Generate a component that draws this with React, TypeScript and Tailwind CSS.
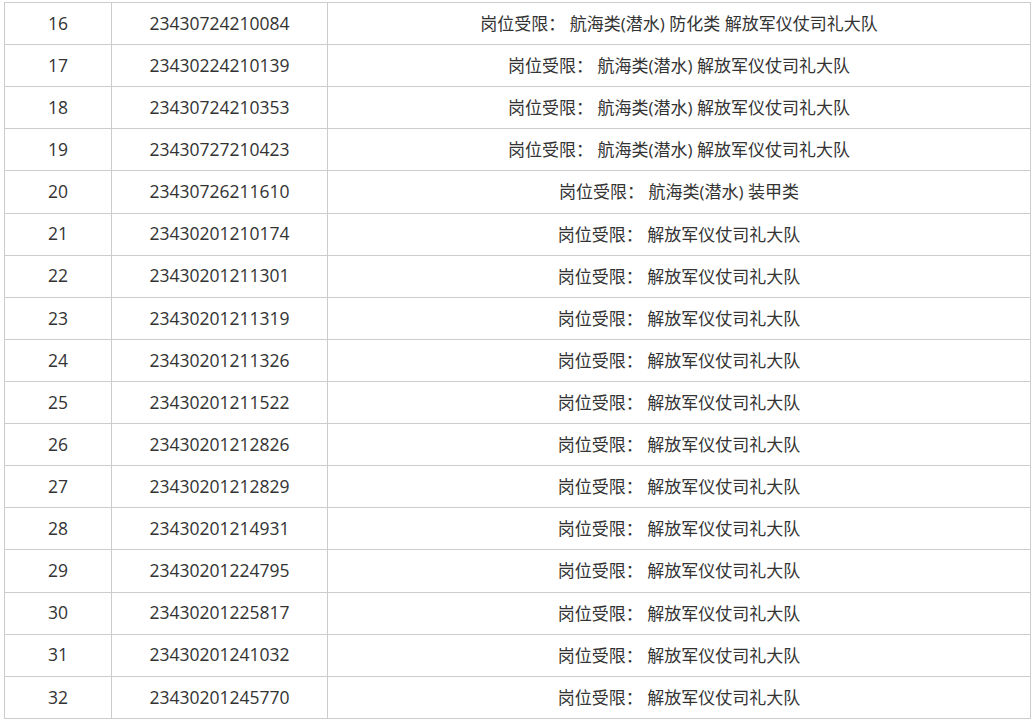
import React from "react";

const rows: [number, string, string][] = [
  [16, "23430724210084", "航海类(潜水) 防化类 解放军仪仗司礼大队"],
  [17, "23430224210139", "航海类(潜水) 解放军仪仗司礼大队"],
  [18, "23430724210353", "航海类(潜水) 解放军仪仗司礼大队"],
  [19, "23430727210423", "航海类(潜水) 解放军仪仗司礼大队"],
  [20, "23430726211610", "航海类(潜水) 装甲类"],
  [21, "23430201210174", "解放军仪仗司礼大队"],
  [22, "23430201211301", "解放军仪仗司礼大队"],
  [23, "23430201211319", "解放军仪仗司礼大队"],
  [24, "23430201211326", "解放军仪仗司礼大队"],
  [25, "23430201211522", "解放军仪仗司礼大队"],
  [26, "23430201212826", "解放军仪仗司礼大队"],
  [27, "23430201212829", "解放军仪仗司礼大队"],
  [28, "23430201214931", "解放军仪仗司礼大队"],
  [29, "23430201224795", "解放军仪仗司礼大队"],
  [30, "23430201225817", "解放军仪仗司礼大队"],
  [31, "23430201241032", "解放军仪仗司礼大队"],
  [32, "23430201245770", "解放军仪仗司礼大队"],
];

export default function App() {
  return (
    <div className="bg-white w-[1031px] h-[720px] overflow-hidden pl-[4px] pt-[2px] text-[#333] text-[17px] [font-family:'Open_Sans','Noto_Sans_CJK_SC',sans-serif]">
      <table className="border-collapse table-fixed w-[1026px]">
        <colgroup>
          <col className="w-[107px]" />
          <col className="w-[216px]" />
          <col className="w-[703px]" />
        </colgroup>
        <tbody>
          {rows.map(([n, id, t]) => (
            <tr key={n} className="h-[42.12px]">
              <td className="border border-[#cccccc] text-center p-0 leading-none text-[17.5px]">{n}</td>
              <td className="border border-[#cccccc] text-center p-0 leading-none text-[17.5px]">{id}</td>
              <td className="border border-[#cccccc] text-center p-0 leading-none">
                岗位受限：&nbsp;{t}
              </td>
            </tr>
          ))}
        </tbody>
      </table>
    </div>
  );
}
